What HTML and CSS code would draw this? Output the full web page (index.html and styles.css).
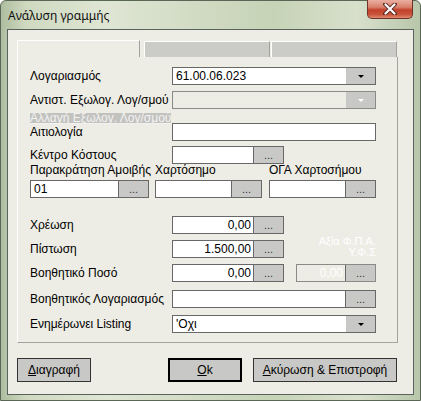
FILE: index.html
```html
<!DOCTYPE html>
<html lang="el">
<head>
<meta charset="utf-8">
<title>Ανάλυση γραμμής</title>
<link rel="stylesheet" href="styles.css">
</head>
<body>
<div class="window">
  <div class="titlebar">
    <span class="title">Ανάλυση γραμμής</span>
    <div class="close">
      <svg width="14" height="12" viewBox="0 0 14 12">
        <path d="M2 1 L12 11 M12 1 L2 11" stroke="#5a2a22" stroke-width="4" stroke-linecap="round"/>
        <path d="M2.5 1.5 L11.5 10.5 M11.5 1.5 L2.5 10.5" stroke="#ffffff" stroke-width="2.2" stroke-linecap="round"/>
      </svg>
    </div>
  </div>
  <div class="client">
    <div class="tabs">
      <div class="tab active"></div>
      <div class="tab t2"></div>
      <div class="tab t3"></div>
    </div>
    <div class="panel">
      <div class="row mt10">
        <span class="lbl">Λογαριασμός</span>
        <div class="field wide"><span class="val">61.00.06.023</span><span class="drop"><i class="tri"></i></span></div>
      </div>
      <div class="row mt6">
        <span class="lbl">Αντιστ. Εξωλογ. Λογ/σμού</span>
        <div class="field wide disabled"><span class="val"></span><span class="drop"><i class="tri white"></i></span></div>
      </div>
      <div class="linkrow"><span class="link">Αλλαγή Εξωλογ. Λογ/σμού</span></div>
      <div class="row">
        <span class="lbl">Αιτιολογία</span>
        <div class="field wide"><span class="val"></span></div>
      </div>
      <div class="row mt5">
        <span class="lbl">Κέντρο Κόστους</span>
        <div class="field short"><span class="val"></span><span class="btn">...</span></div>
      </div>
      <div class="trio">
        <div class="grp g1">
          <span class="toplbl">Παρακράτηση Αμοιβής</span>
          <div class="field"><span class="val">01</span><span class="btn">...</span></div>
        </div>
        <div class="grp g2">
          <span class="toplbl">Χαρτόσημο</span>
          <div class="field"><span class="val"></span><span class="btn">...</span></div>
        </div>
        <div class="grp g3">
          <span class="toplbl">ΟΓΑ Χαρτοσήμου</span>
          <div class="field"><span class="val"></span><span class="btn">...</span></div>
        </div>
      </div>
      <div class="row mt18">
        <span class="lbl">Χρέωση</span>
        <div class="field short"><span class="val num">0,00</span><span class="btn">...</span></div>
      </div>
      <div class="row mt6">
        <span class="lbl">Πίστωση</span>
        <div class="field short"><span class="val num">1.500,00</span><span class="btn">...</span></div>
        <span class="vatlbl"><span class="vl">Αξία Φ.Π.Α.</span><span class="vl">Υ.Φ.Σ</span></span>
      </div>
      <div class="row mt6">
        <span class="lbl">Βοηθητικό Ποσό</span>
        <div class="field short"><span class="val num">0,00</span><span class="btn">...</span></div>
        <div class="field small disabled"><span class="val num dis">0,00</span><span class="btn">...</span></div>
      </div>
      <div class="row mt8">
        <span class="lbl">Βοηθητικός Λογαριασμός</span>
        <div class="field wide"><span class="val"></span><span class="btn">...</span></div>
      </div>
      <div class="row mt7">
        <span class="lbl">Ενημέρωνει Listing</span>
        <div class="field wide"><span class="val">'Οχι</span><span class="drop"><i class="tri"></i></span></div>
      </div>
    </div>
    <div class="buttons">
      <button class="pb del"><u>Δ</u>ιαγραφή</button>
      <button class="pb ok"><u>O</u>k</button>
      <button class="pb cancel"><u>Α</u>κύρωση &amp; Επιστροφή</button>
    </div>
  </div>
</div>
</body>
</html>
```

FILE: styles.css
```css
html, body {
  margin: 0;
  padding: 0;
  background: #ffffff;
}

.window {
  width: 421px;
  height: 401px;
  box-sizing: border-box;
  display: flex;
  flex-direction: column;
  border: 1px solid #5b6756;
  border-radius: 6px 6px 0 0;
  background: linear-gradient(to right, #aebd9f 0%, #cfd9c0 6%, #dfe6d4 25%, #d2dcc5 45%, #c6d3b6 65%, #d8e0cc 85%, #b8c6aa 100%);
  font-family: "Liberation Sans", Arial, sans-serif;
  color: #000;
}

.titlebar {
  height: 28px;
  display: flex;
  align-items: flex-start;
  padding: 0 7px 0 7px;
}

.title {
  font-family: "Noto Sans", "Open Sans", sans-serif;
  font-size: 12px;
  line-height: 28px;
  margin-top: 1px;
  color: #111;
}

.close {
  margin-left: auto;
  width: 46px;
  height: 19px;
  box-sizing: border-box;
  margin-top: -1px;
  border: 1px solid #6e3328;
  border-top: none;
  border-radius: 0 0 5px 5px;
  background: linear-gradient(to bottom, #eab0a2 0%, #d9806b 40%, #c2412a 55%, #c9523a 80%, #e08a6f 100%);
  display: flex;
  align-items: center;
  justify-content: center;
}

.client {
  flex: 1;
  margin: 0 6px 5px 6px;
  border: 1px solid #59625f;
  background: #eeede5;
  padding: 10px 0 0 9px;
  display: flex;
  flex-direction: column;
}

.tabs {
  display: flex;
  align-items: flex-end;
  height: 17px;
}

.tab {
  box-sizing: border-box;
  border-top: 1px solid #ffffff;
  border-left: 1px solid #ffffff;
  border-right: 1px solid #a3a39c;
}

.tab.active {
  width: 123px;
  height: 17px;
  background: #eeede5;
}

.tab.t2 {
  margin-left: 4px;
  width: 126px;
  height: 16px;
  background: #cbcbc7;
}

.tab.t3 {
  margin-left: 1px;
  width: 126px;
  height: 16px;
  background: #cbcbc7;
}

.panel {
  width: 381px;
  height: 286px;
  box-sizing: border-box;
  border-left: 1px solid #ffffff;
  border-bottom: 1px solid #a3a39c;
  border-right: 1px solid #a3a39c;
  padding: 0 0 0 12px;
  display: flex;
  flex-direction: column;
}

.row {
  display: flex;
  align-items: center;
  height: 18px;
  flex-shrink: 0;
}

.mt5 { margin-top: 5px; }
.mt6 { margin-top: 6px; }
.mt7 { margin-top: 7px; }
.mt8 { margin-top: 8px; }
.mt10 { margin-top: 10px; }
.mt18 { margin-top: 18px; }

.lbl {
  width: 142px;
  flex-shrink: 0;
  font-size: 12px;
  white-space: nowrap;
}

.field {
  display: flex;
  height: 18px;
  box-sizing: border-box;
  border: 1px solid #686868;
  background: #ffffff;
  flex-shrink: 0;
}

.field.wide { width: 204px; }
.field.short { width: 112px; }
.field.small { width: 80px; margin-left: 12px; }

.field.disabled {
  background: #eeede5;
  border-color: #8a8a86;
}

.val {
  flex: 1;
  font-size: 12px;
  line-height: 16px;
  padding: 0 3px;
  white-space: nowrap;
  overflow: hidden;
}

.val.num {
  text-align: right;
  padding-right: 2px;
}

.val.dis {
  color: #ffffff;
}

.btn {
  width: 29px;
  flex-shrink: 0;
  background: #c8c8c6;
  border-left: 1px solid #686868;
  font-size: 11px;
  line-height: 17px;
  text-align: center;
  color: #333;
}

.drop {
  width: 29px;
  flex-shrink: 0;
  background: #c8c8c6;
  display: flex;
  align-items: center;
  justify-content: center;
}

.tri {
  display: block;
  width: 0;
  height: 0;
  border-left: 3px solid transparent;
  border-right: 3px solid transparent;
  border-top: 3px solid #000;
}

.tri.white {
  border-top-color: #ffffff;
}

.linkrow {
  height: 10px;
  margin-top: 4px;
  display: flex;
}

.link {
  background: #c2c2bf;
  color: #f2f2f2;
  font-size: 12px;
  line-height: 10px;
  height: 10px;
  text-decoration: underline;
  white-space: nowrap;
}

.trio {
  display: flex;
  flex-shrink: 0;
}

.grp {
  display: flex;
  flex-direction: column;
}

.grp.g1 { width: 119px; }
.grp.g2 { width: 107px; margin-left: 6px; }
.grp.g3 { width: 107px; margin-left: 7px; }

.toplbl {
  height: 16px;
  font-size: 12px;
  line-height: 13px;
  white-space: nowrap;
}

.grp .field { width: 100%; }

.vatlbl {
  width: 92px;
  height: 22px;
  align-self: flex-end;
  display: flex;
  flex-direction: column;
  align-items: flex-end;
  color: #ffffff;
  font-size: 11px;
  line-height: 11px;
}

.vl {
  display: block;
  height: 11px;
  white-space: nowrap;
}

.buttons {
  display: flex;
  margin-top: 15px;
  height: 24px;
}

.pb {
  height: 24px;
  box-sizing: border-box;
  background: #c8c8c6;
  border: 1px solid #333;
  font-family: "Liberation Sans", Arial, sans-serif;
  font-size: 12px;
  color: #000;
  padding: 0;
  margin: 0;
}

.pb.del { width: 74px; }
.pb.ok { width: 74px; margin-left: 77px; border: 2px solid #000; }
.pb.cancel { width: 144px; margin-left: 11px; }
```
